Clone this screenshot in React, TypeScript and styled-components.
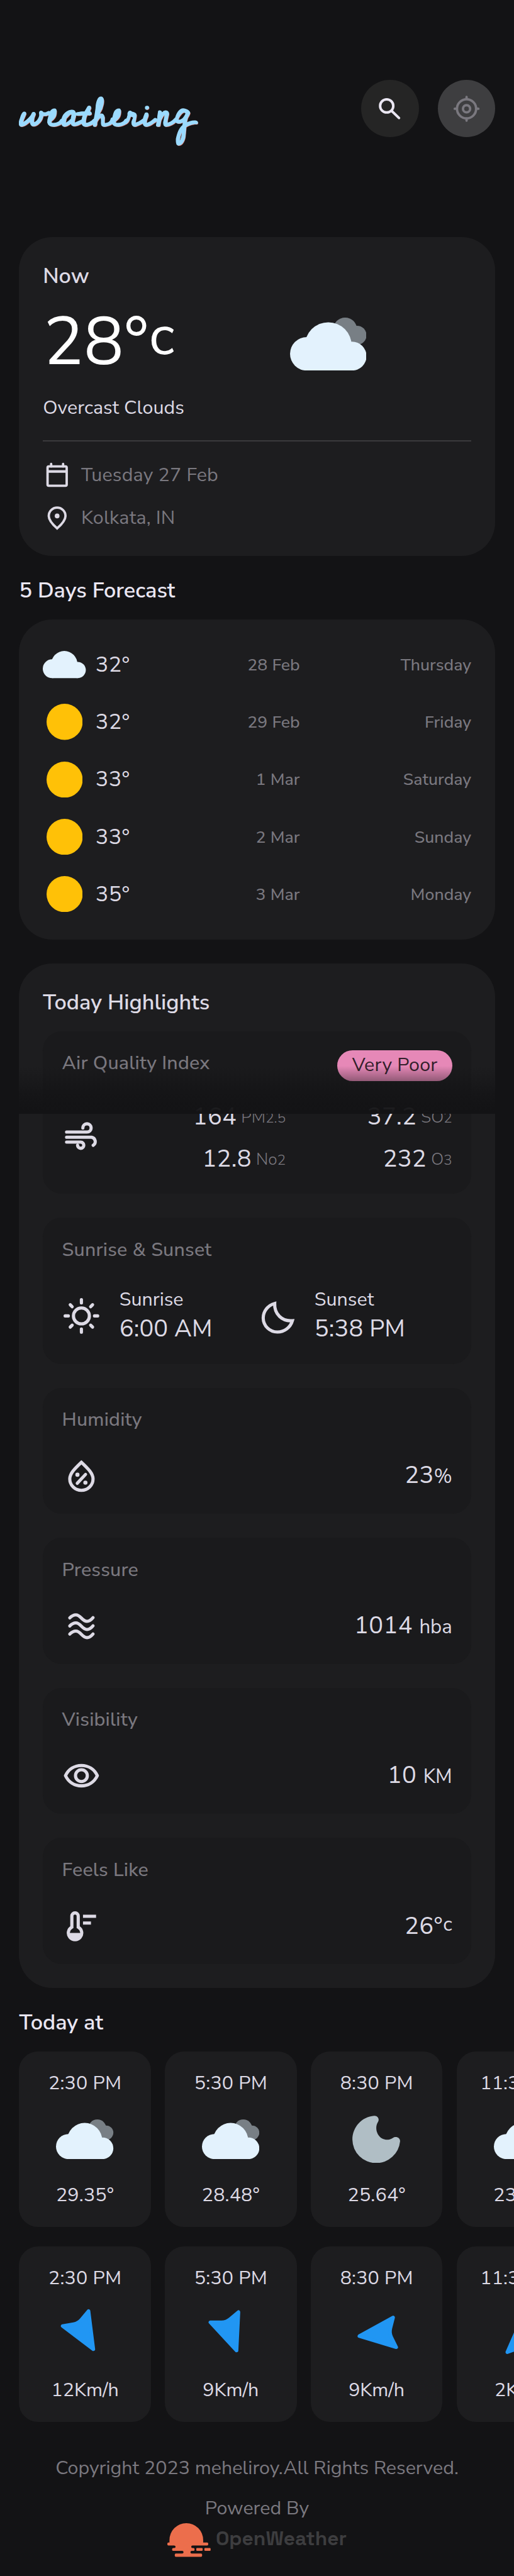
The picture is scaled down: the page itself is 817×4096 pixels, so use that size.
import React from "react";
import styled, { createGlobalStyle } from "styled-components";

/* One design unit is 1/430 of the 817px wide page. */
const u = (n: number) => `${Math.round(n * 190) / 100}px`;

const color = {
  page: "#131315",
  card: "#1d1d1f",
  inner: "#1a1a1c",
  title: "#eae6f2",
  text: "#dddae5",
  muted: "#7a787f",
  cloud: "#e3f2fd",
  sun: "#ffc107",
  wind: "#2196f3",
};

const GlobalStyle = createGlobalStyle`
  *, *::before, *::after { box-sizing: border-box; }
  body {
    margin: 0;
    background: ${color.page};
    color: ${color.text};
    font-family: "Nunito Sans", "Open Sans", "Noto Sans", sans-serif;
    overflow-x: hidden;
  }
  h1, h2, h3, p { margin: 0; font-weight: inherit; }
  svg { display: block; flex: none; }
`;

const Page = styled.div`
  position: relative;
  width: 817px;
  height: 4096px;
  overflow: hidden;
  display: flex;
  flex-direction: column;
`;

const Label = styled.span<{
  $size?: number;
  $track?: number;
  $weight?: number;
  $line?: number;
  $muted?: boolean;
}>`
  font-size: ${(p) => u(p.$size ?? 16)};
  line-height: ${(p) => u(p.$line ?? 20)};
  letter-spacing: ${(p) => u(p.$track ?? 0)};
  font-weight: ${(p) => p.$weight ?? 400};
  color: ${(p) => (p.$muted ? color.muted : "inherit")};
  white-space: pre;
`;

/* ---------- header ---------- */

const Header = styled.header`
  display: flex;
  align-items: flex-start;
  height: ${u(198.4)};
  padding: ${u(67)} ${u(15.7)} 0 ${u(16)};
`;

const Brand = styled.h1`
  width: ${u(150.4)};
  height: ${u(56)};
  margin-right: auto;
  overflow: hidden;
  font-family: "Cedarville Cursive", "Dancing Script", Lato, cursive;
  font-weight: 700;
  font-size: ${u(32.4)};
  line-height: ${u(57.4)};
  white-space: nowrap;
  color: #9bdaff;
  -webkit-text-stroke: 1.2px #9bdaff;
  text-shadow: 1px 1px 0 #e0705f;
`;

const RoundButton = styled.button<{ $active?: boolean }>`
  width: ${u(48)};
  height: ${u(48)};
  margin-left: ${u(16)};
  padding: 0;
  border: 0;
  border-radius: 50%;
  background: ${(p) => (p.$active ? "#3e3e40" : "#252525")};
  color: ${(p) => (p.$active ? color.muted : "#ebe7f3")};
`;

/* ---------- cards ---------- */

const Card = styled.section<{ $height?: number; $gapTop?: number }>`
  width: ${u(398.4)};
  height: ${(p) => (p.$height ? u(p.$height) : "auto")};
  margin: ${(p) => u(p.$gapTop ?? 0)} 0 0 ${u(15.9)};
  padding: ${u(20)};
  border-radius: ${u(28)};
  background: ${color.card};
`;

const SectionTitle = styled.h2`
  height: ${u(52.8)};
  padding: ${u(16.7)} ${u(16)} 0;
  line-height: 0;
  color: ${color.title};
`;

const Stack = styled.div`
  display: flex;
  flex-direction: column;
`;

const NowRow = styled.div`
  display: flex;
  align-items: flex-start;
  height: ${u(61.6)};
  margin: ${u(9.1)} 0 ${u(15.6)};
`;

const BigTemp = styled.p`
  width: ${u(206.5)};
  padding-left: ${u(0.4)};
  font-size: ${u(56)};
  line-height: ${u(68.2)};
  letter-spacing: ${u(0.1)};
  color: #fff;
`;

const RaisedUnit = styled.span<{ $size: number; $rise: number }>`
  font-size: ${(p) => u(p.$size)};
  line-height: 0;
  letter-spacing: 0;
  vertical-align: ${(p) => u(p.$rise)};
`;

const NowIcon = styled.div`
  margin-top: ${u(13.1)};
`;

const Rule = styled.hr`
  width: 100%;
  height: ${u(1)};
  margin: ${u(14.8)} 0 ${u(16)};
  border: 0;
  background: #3b3a3d;
`;

const MetaRow = styled.div`
  display: flex;
  align-items: center;
  gap: ${u(8)};
  height: ${u(24)};
  margin-bottom: ${u(12)};
  ${Label} {
    padding-bottom: ${u(0.6)};
  }
`;

/* ---------- forecast ---------- */

const ForecastRow = styled.div`
  display: grid;
  grid-template-columns: 107fr 108fr 143.4fr;
  align-items: center;
  height: ${u(36)};
  & + & {
    margin-top: ${u(12)};
  }
  & > ${Label} {
    text-align: right;
  }
`;

const Lead = styled.div`
  display: flex;
  align-items: center;
  gap: ${u(8)};
`;

const IconSlot = styled.div<{ $w: number; $h: number }>`
  width: ${(p) => u(p.$w)};
  height: ${(p) => u(p.$h)};
  display: flex;
  align-items: center;
  justify-content: center;
`;

/* ---------- highlights ---------- */

const TileList = styled.div`
  margin-top: ${u(11.4)};
`;

const Tile = styled.article<{ $height: number }>`
  height: ${(p) => u(p.$height)};
  padding: ${u(16)};
  border-radius: ${u(16)};
  background: ${color.inner};
  display: flex;
  flex-direction: column;
  & + & {
    margin-top: ${u(20)};
  }
`;

const TileHead = styled.div`
  display: flex;
  justify-content: space-between;
  align-items: flex-start;
  height: ${u(22)};
`;

const Badge = styled.span`
  width: ${u(96)};
  height: ${u(25.8)};
  border-radius: ${u(12.9)};
  background: #e688b7;
  color: #34202c;
  text-align: center;
`;

const TileBody = styled.div<{ $height: number; $top: number }>`
  display: flex;
  align-items: center;
  justify-content: space-between;
  height: ${(p) => u(p.$height)};
  margin-top: ${(p) => u(p.$top)};
`;

const Reading = styled.p`
  font-size: ${u(20)};
  line-height: ${u(28)};
  letter-spacing: ${u(0.25)};
  white-space: pre;
`;

const ReadingUnit = styled.span`
  font-size: ${u(16.4)};
  letter-spacing: 0;
`;

const Gases = styled.div`
  display: grid;
  grid-template-columns: 1fr 1fr;
  row-gap: ${u(8)};
  width: ${u(278.4)};
  padding-top: ${u(2.9)};
`;

const Gas = styled.p`
  text-align: right;
  font-size: ${u(20)};
  line-height: ${u(27.2)};
  letter-spacing: ${u(0.15)};
  white-space: nowrap;
`;

const GasUnit = styled.span`
  margin-left: ${u(3.8)};
  font-size: ${u(13.8)};
  font-weight: 300;
  line-height: 0;
  letter-spacing: 0;
  vertical-align: ${u(1.8)};
  color: ${color.muted};
  small {
    font-size: ${u(12)};
  }
`;

const SunPair = styled.div`
  display: grid;
  grid-template-columns: 1fr 1fr;
  height: ${u(49.2)};
  margin-top: ${u(19.6)};
`;

const SunItem = styled.div`
  display: flex;
  align-items: center;
  gap: ${u(16)};
`;

const BottomFade = styled.div`
  position: absolute;
  left: 0;
  right: 0;
  top: ${u(892)};
  height: ${u(40)};
  background: linear-gradient(
    rgba(19, 19, 21, 0) 0%,
    rgba(19, 19, 21, 0.4) 32%,
    rgba(19, 19, 21, 0.76) 60%,
    rgba(19, 19, 21, 0.94) 86%,
    rgb(19, 19, 21) 100%
  );
`;

/* ---------- hourly ---------- */

const HourStrip = styled.div`
  display: flex;
  gap: ${u(11.8)};
  margin-bottom: ${u(16.1)};
  padding-left: ${u(16)};
`;

const HourCard = styled.article`
  flex: none;
  width: ${u(110.2)};
  height: ${u(147)};
  padding: ${u(16.7)} 0 0;
  border-radius: ${u(16)};
  background: ${color.card};
  display: flex;
  flex-direction: column;
  align-items: center;
`;

const HourIcon = styled.div`
  display: flex;
  align-items: center;
  justify-content: center;
  width: ${u(48)};
  height: ${u(48)};
  margin: ${u(12.9)} 0 ${u(12.4)};
`;

/* ---------- footer ---------- */

const Footer = styled.footer`
  display: flex;
  flex-direction: column;
  align-items: center;
  gap: ${u(13.7)};
  padding-top: ${u(12.6)};
  color: ${color.muted};
`;

const Provider = styled.div`
  display: flex;
  flex-direction: column;
  align-items: center;
  gap: ${u(2.6)};
`;

const ProviderLogo = styled.div`
  display: flex;
  align-items: flex-start;
  gap: ${u(4.2)};
`;

const ProviderName = styled.span`
  margin-top: ${u(1.7)};
  font-family: "Space Grotesk", Roboto, "Open Sans", sans-serif;
  font-weight: 700;
  font-size: ${u(16.7)};
  line-height: ${u(22)};
  color: #3d3d3f;
`;

/* ---------- icons ---------- */

const Line = ({ size = 32, children }: { size?: number; children: React.ReactNode }) => (
  <svg
    width={size * 1.9}
    height={size * 1.9}
    viewBox="0 0 24 24"
    fill="none"
    stroke="currentColor"
    strokeWidth="2"
    strokeLinecap="round"
  >
    {children}
  </svg>
);

const SearchIcon = () => (
  <svg width="100%" height="100%" viewBox="0 0 48 48" fill="none" stroke="currentColor" strokeWidth="2.1" strokeLinecap="round">
    <circle cx="21.4" cy="21.8" r="5.5" />
    <path d="M25.5 25.9L31.7 31.9" />
  </svg>
);

const LocateIcon = () => (
  <svg width="100%" height="100%" viewBox="0 0 48 48" fill="none" stroke="currentColor" strokeWidth="2" strokeLinecap="round">
    <circle cx="24" cy="24.2" r="8" />
    <circle cx="24" cy="24.2" r="3" />
    <path d="M24 14.3v1.6M24 32.5v1.6M14.1 24.2h1.6M32.3 24.2h1.6" />
  </svg>
);

const CalendarIcon = () => (
  <Line size={24}>
    <rect x="4" y="5.1" width="16" height="16.2" rx="1" />
    <path d="M4 9.3h16" strokeWidth="2.2" strokeLinecap="butt" />
    <path d="M7 3v2M17 3v2" />
  </Line>
);

const PinIcon = () => (
  <Line size={24}>
    <path d="M12 20.6C7.5 16.6 5 13.3 5 10.2a7 7 0 0 1 14 0c0 3.1-2.5 6.4-7 10.4Z" />
    <circle cx="12" cy="10.2" r="2" fill="currentColor" stroke="none" />
  </Line>
);

const AirIcon = () => (
  <Line>
    <path d="M2.7 9.5H15.5a2.6 2.6 0 1 0-2.6-2.6M2.7 12.7H18.4a2.8 2.8 0 0 1 1 5.1M2.7 15.8H11.6a1.95 1.95 0 1 1-2 2" />
  </Line>
);

const SunLineIcon = () => (
  <Line>
    <circle cx="12" cy="12" r="5" />
    <path d="M12 1.8v2M12 20.2v2M1.8 12h2M20.2 12h2M5 5l1.2 1.2M17.8 17.8L19 19M5 19l1.2-1.2M17.8 6.2L19 5" />
  </Line>
);

const MoonLineIcon = () => (
  <Line>
    <path d="M10.9 4.2C6.5 5.4 3.7 9.2 3.7 13.3a8.9 8.9 0 0 0 8.9 8.8c4.4 0 8.2-2.9 9.4-7.1C15.5 15.6 10.6 10.8 10.9 4.2Z" />
  </Line>
);

const HumidityIcon = () => (
  <Line>
    <path d="M12 3.6C8 7.4 4.7 10.6 4.7 14a7.3 7.2 0 0 0 14.6 0C19.3 10.6 16 7.4 12 3.6Z" />
    <path d="M14.6 11.2L9.4 16.8" />
    <circle cx="9.5" cy="11.4" r="1.3" fill="currentColor" stroke="none" />
    <circle cx="14.5" cy="16.4" r="1.3" fill="currentColor" stroke="none" />
  </Line>
);

const WavesIcon = () => (
  <Line>
    {[0, 5.1, 10.2].map((dy) => (
      <path key={dy} d={`M4.7 ${6.9 + dy}c1.2-1.2 2.2-1.9 3.8-1.9 3 0 4 4.1 7 4.1 1.6 0 2.6-.9 3.8-2.3`} />
    ))}
  </Line>
);

const EyeIcon = () => (
  <Line>
    <path d="M2 12C3.9 8 7.6 5.6 12 5.6S20.1 8 22 12C20.1 16 16.4 18.4 12 18.4S3.9 16 2 12Z" strokeLinejoin="round" />
    <circle cx="12" cy="12" r="3.7" />
  </Line>
);

const ThermometerIcon = () => (
  <Line>
    <path d="M6 12.7V5.8a2 2 0 0 1 4 0v6.9a4.2 4.2 0 1 1-4 0Z" />
    <path d="M3.8 16.4h8.4a4.2 4.2 0 0 1-8.4 0Z" fill="currentColor" stroke="none" />
    <path d="M13 5.9h8.2M13 10.2h5" strokeLinecap="butt" />
  </Line>
);

const Cloud = ({ width, overcast }: { width: number; overcast?: boolean }) => {
  const top = overcast ? 0 : 3.8;
  const h = 44.4 - top;
  return (
    <svg width={width * 1.9} height={(width * 1.9 * h) / 64} viewBox={`0 ${top} 64 ${h}`}>
      {overcast && (
        <g fill="#787f85">
          <circle cx="46.1" cy="10" r="10" />
          <circle cx="56" cy="14.8" r="8" />
        </g>
      )}
      <g fill={color.cloud}>
        <circle cx="14" cy="30.3" r="14" />
        <circle cx="32" cy="23.5" r="19.6" />
        <circle cx="51.9" cy="32.2" r="12.1" />
        <rect x="14" y="30" width="38" height="14.3" />
      </g>
    </svg>
  );
};

const SunDisc = () => (
  <svg width="57.4" height="57.4" viewBox="0 0 30 30">
    <circle cx="15" cy="15" r="15" fill={color.sun} />
  </svg>
);

const Moon = () => (
  <svg width="76.4" height="75.4" viewBox="0 0 40 39.6">
    <path
      fill="#b0bec5"
      d="M18.2 0.1C21.5 -0.1 22.8 3.2 21.3 5.4C18.5 10 20.2 16.5 25 19.2C28 20.7 31 20.3 33.8 18.6C36.5 16.8 40.1 18.5 39.8 21.5A20 20 0 0 1 19.8 39.6A19.8 19.8 0 0 1 0 20C0 9.5 8 .8 18.2 .1Z"
    />
  </svg>
);

const WindArrow = ({ angle }: { angle: number }) => (
  <svg width="91.2" height="91.2" viewBox="0 0 48 48">
    <path
      transform={`rotate(${angle} 24 24)`}
      fill={color.wind}
      stroke={color.wind}
      strokeWidth="3"
      strokeLinejoin="round"
      d="M24 9.5L36.5 39.2L27.8 36Q24 34.6 20.2 36L11.5 39.2Z"
    />
  </svg>
);

const ProviderMark = () => (
  <svg width={36.3 * 1.9} height={28 * 1.9} viewBox="38 48 327 252" fill="#ec6e4c">
    <path d="M54 194V175a127 127 0 0 1 254 0v19h30a8 8 0 0 1 8 8v6a8 8 0 0 1-8 8H228q-10 0-10 10t10 9h7a8 8 0 0 1 8 8v6a8 8 0 0 1-8 8h-13q-10 0-10 10t10 10h70a8 8 0 0 1 8 8v8a8 8 0 0 1-8 8H102a8 8 0 0 1-8-8v-8a8 8 0 0 1 8-8h48q10 0 10-10t-10-10H82a8 8 0 0 1-8-8v-6a8 8 0 0 1 8-8h8q10 0 10-9t-10-10H46a8 8 0 0 1-8-8v-6a8 8 0 0 1 8-8Z" />
    <rect x="256" y="235" width="48" height="22" rx="6" />
    <rect x="317" y="235" width="47" height="22" rx="6" />
  </svg>
);

/* ---------- data ---------- */

const forecast = [
  { icon: "cloud", temp: "32°", date: "28 Feb", day: "Thursday" },
  { icon: "sun", temp: "32°", date: "29 Feb", day: "Friday" },
  { icon: "sun", temp: "33°", date: "1 Mar", day: "Saturday" },
  { icon: "sun", temp: "33°", date: "2 Mar", day: "Sunday" },
  { icon: "sun", temp: "35°", date: "3 Mar", day: "Monday" },
];

const gases = [
  { value: "164", name: "PM", sub: "2.5" },
  { value: "37.2", name: "SO", sub: "2" },
  { value: "12.8", name: "No", sub: "2" },
  { value: "232", name: "O", sub: "3" },
];

const hours = [
  { time: "2:30 PM", temp: "29.35°", night: false, angle: 150, wind: "12Km/h" },
  { time: "5:30 PM", temp: "28.48°", night: false, angle: 160, wind: "9Km/h" },
  { time: "8:30 PM", temp: "25.64°", night: true, angle: 264, wind: "9Km/h" },
  { time: "11:30 PM", temp: "23.51°", night: false, angle: 1, wind: "2Km/h" },
];

/* ---------- parts ---------- */

const TileTitle = ({ children }: { children: React.ReactNode }) => (
  <Label as="h3" $weight={500} $line={22} $track={0.1} $muted>
    {children}
  </Label>
);

const SimpleTile = ({
  title,
  icon,
  children,
}: {
  title: string;
  icon: React.ReactNode;
  children: React.ReactNode;
}) => (
  <Tile $height={105.55}>
    <TileTitle>{title}</TileTitle>
    <TileBody $height={32} $top={19.6}>
      {icon}
      <Reading>{children}</Reading>
    </TileBody>
  </Tile>
);

const SunTime = ({ icon, name, time }: { icon: React.ReactNode; name: string; time: string }) => (
  <SunItem>
    {icon}
    <Stack>
      <Label $line={21.2}>{name}</Label>
      <Label $size={20} $line={28} $track={0.05}>
        {time}
      </Label>
    </Stack>
  </SunItem>
);

const Highlights = () => (
  <Card $height={857.6} $gapTop={20}>
    <Stack>
      <Label as="h2" $size={18} $weight={600} $line={25.4}>
        Today Highlights
      </Label>
      <TileList>
        <Tile $height={136.1}>
          <TileHead>
            <TileTitle>Air Quality Index</TileTitle>
            <Badge>
              <Label $line={25} $track={0.11}>
                Very Poor
              </Label>
            </Badge>
          </TileHead>
          <TileBody $height={62.4} $top={18.6}>
            <AirIcon />
            <Gases>
              {gases.map((g) => (
                <Gas key={g.value}>
                  {g.value}
                  <GasUnit>
                    {g.name}
                    <small>{g.sub}</small>
                  </GasUnit>
                </Gas>
              ))}
            </Gases>
          </TileBody>
        </Tile>

        <Tile $height={122.3}>
          <TileTitle>{"Sunrise & Sunset"}</TileTitle>
          <SunPair>
            <SunTime icon={<SunLineIcon />} name="Sunrise" time="6:00 AM" />
            <SunTime icon={<MoonLineIcon />} name="Sunset" time="5:38 PM" />
          </SunPair>
        </Tile>

        <SimpleTile title="Humidity" icon={<HumidityIcon />}>
          23<ReadingUnit>%</ReadingUnit>
        </SimpleTile>
        <SimpleTile title="Pressure" icon={<WavesIcon />}>
          1014 <ReadingUnit>hba</ReadingUnit>
        </SimpleTile>
        <SimpleTile title="Visibility" icon={<EyeIcon />}>
          10 <ReadingUnit>KM</ReadingUnit>
        </SimpleTile>
        <SimpleTile title="Feels Like" icon={<ThermometerIcon />}>
          26°
          <RaisedUnit $size={16.6} $rise={2.6}>
            c
          </RaisedUnit>
        </SimpleTile>
      </TileList>
    </Stack>
  </Card>
);

export default function App() {
  return (
    <>
      <GlobalStyle />
      <Page>
        <Header>
          <Brand>weathering</Brand>
          <RoundButton aria-label="Search">
            <SearchIcon />
          </RoundButton>
          <RoundButton $active aria-label="Current location">
            <LocateIcon />
          </RoundButton>
        </Header>

        <Card $height={267.1}>
          <Stack>
            <Label as="h2" $size={18} $weight={600} $line={25}>
              Now
            </Label>
            <NowRow>
              <BigTemp>
                28°
                <RaisedUnit $size={46.7} $rise={8.2}>
                  c
                </RaisedUnit>
              </BigTemp>
              <NowIcon>
                <Cloud width={64} overcast />
              </NowIcon>
            </NowRow>
            <Label $line={24} $track={0.02}>
              Overcast Clouds
            </Label>
            <Rule />
            <MetaRow>
              <CalendarIcon />
              <Label $muted $track={0.1}>
                Tuesday 27 Feb
              </Label>
            </MetaRow>
            <MetaRow>
              <PinIcon />
              <Label $muted $track={0.1}>
                Kolkata, IN
              </Label>
            </MetaRow>
          </Stack>
        </Card>

        <SectionTitle>
          <Label $size={18} $weight={600} $line={24}>
            5 Days Forecast
          </Label>
        </SectionTitle>

        <Card $height={268}>
          {forecast.map((f) => (
            <ForecastRow key={f.day}>
              <Lead>
                <IconSlot $w={36} $h={36}>
                  {f.icon === "sun" ? <SunDisc /> : <Cloud width={36} />}
                </IconSlot>
                <Label $size={18} $track={0.2}>
                  {f.temp}
                </Label>
              </Lead>
              <Label $size={14} $weight={500} $track={0.05} $muted>
                {f.date}
              </Label>
              <Label $size={14} $weight={500} $track={0.02} $muted>
                {f.day}
              </Label>
            </ForecastRow>
          ))}
        </Card>

        <Highlights />

        <SectionTitle>
          <Label $size={18} $weight={600} $line={24}>
            Today at
          </Label>
        </SectionTitle>

        <HourStrip>
          {hours.map((h) => (
            <HourCard key={h.time}>
              <Label $track={0.1}>{h.time}</Label>
              <HourIcon>{h.night ? <Moon /> : <Cloud width={48} overcast />}</HourIcon>
              <Label $track={0.1}>{h.temp}</Label>
            </HourCard>
          ))}
        </HourStrip>
        <HourStrip>
          {hours.map((h) => (
            <HourCard key={h.time}>
              <Label $track={0.1}>{h.time}</Label>
              <HourIcon>
                <WindArrow angle={h.angle} />
              </HourIcon>
              <Label>{h.wind}</Label>
            </HourCard>
          ))}
        </HourStrip>

        <Footer>
          <Label>Copyright 2023 meheliroy.All Rights Reserved.</Label>
          <Provider>
            <Label>Powered By</Label>
            <ProviderLogo>
              <ProviderMark />
              <ProviderName>OpenWeather</ProviderName>
            </ProviderLogo>
          </Provider>
        </Footer>

        <BottomFade />
      </Page>
    </>
  );
}
